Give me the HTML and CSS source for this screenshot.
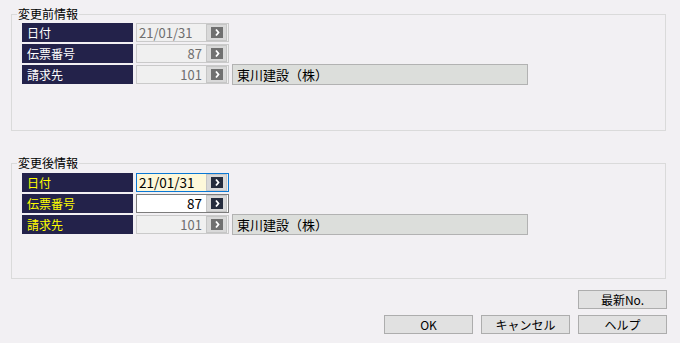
FILE: index.html
```html
<!DOCTYPE html>
<html lang="ja">
<head>
<meta charset="utf-8">
<link rel="stylesheet" href="styles.css">
</head>
<body>
<div class="page">
  <section class="group">
    <div class="group-title">変更前情報</div>
    <div class="row">
      <div class="label">日付</div>
      <div class="field"><span class="val">21/01/31</span><span class="btn"><span class="sq"><svg width="12" height="11" viewBox="0 0 12 11"><path d="M5 2.5 L7.5 5.5 L5 8.5" fill="none" stroke="#fff" stroke-width="1.8"/></svg></span></span></div>
    </div>
    <div class="row">
      <div class="label">伝票番号</div>
      <div class="field"><span class="val num">87</span><span class="btn"><span class="sq"><svg width="12" height="11" viewBox="0 0 12 11"><path d="M5 2.5 L7.5 5.5 L5 8.5" fill="none" stroke="#fff" stroke-width="1.8"/></svg></span></span></div>
    </div>
    <div class="row">
      <div class="label">請求先</div>
      <div class="field"><span class="val num">101</span><span class="btn"><span class="sq"><svg width="12" height="11" viewBox="0 0 12 11"><path d="M5 2.5 L7.5 5.5 L5 8.5" fill="none" stroke="#fff" stroke-width="1.8"/></svg></span></span></div>
      <div class="company">東川建設（株）</div>
    </div>
  </section>

  <section class="group group2">
    <div class="group-title">変更後情報</div>
    <div class="row">
      <div class="label yellow">日付</div>
      <div class="field focus"><span class="val">21/01/31</span><span class="btn"><span class="sq"><svg width="12" height="11" viewBox="0 0 12 11"><path d="M5 2.5 L7.5 5.5 L5 8.5" fill="none" stroke="#fff" stroke-width="1.8"/></svg></span></span></div>
    </div>
    <div class="row">
      <div class="label yellow">伝票番号</div>
      <div class="field edit"><span class="val num">87</span><span class="btn"><span class="sq"><svg width="12" height="11" viewBox="0 0 12 11"><path d="M5 2.5 L7.5 5.5 L5 8.5" fill="none" stroke="#fff" stroke-width="1.8"/></svg></span></span></div>
    </div>
    <div class="row">
      <div class="label yellow">請求先</div>
      <div class="field"><span class="val num">101</span><span class="btn"><span class="sq"><svg width="12" height="11" viewBox="0 0 12 11"><path d="M5 2.5 L7.5 5.5 L5 8.5" fill="none" stroke="#fff" stroke-width="1.8"/></svg></span></span></div>
      <div class="company">東川建設（株）</div>
    </div>
  </section>

  <div class="actions">
    <div class="action-row">
      <button class="pbtn">最新No.</button>
    </div>
    <div class="action-row">
      <button class="pbtn">OK</button>
      <button class="pbtn">キャンセル</button>
      <button class="pbtn">ヘルプ</button>
    </div>
  </div>
</div>
</body>
</html>
```

FILE: styles.css
```css
html, body {
  margin: 0;
  padding: 0;
  background: #f2f0f3;
}
body {
  font-family: "Noto Sans CJK JP", "Noto Sans", sans-serif;
  font-size: 12px;
  color: #000;
}
.page {
  padding: 14px 13px 0 11px;
  width: 680px;
  box-sizing: border-box;
}
.group {
  position: relative;
  box-sizing: border-box;
  width: 655px;
  height: 117px;
  border: 1px solid #dadada;
  padding: 8px 0 0 10px;
  display: flex;
  flex-direction: column;
  gap: 2px;
}
.group2 {
  margin-top: 32px;
  height: 116px;
  padding-top: 9px;
}
.group-title {
  position: absolute;
  left: 5px;
  top: -9px;
  padding: 0 1px;
  background: #f2f0f3;
  line-height: 16px;
  font-size: 12px;
}
.row {
  display: flex;
  align-items: center;
  height: 19px;
  gap: 3px;
}
.label {
  width: 111px;
  height: 19px;
  box-sizing: border-box;
  background: #23224a;
  color: #fff;
  padding-left: 5px;
  line-height: 19px;
  font-size: 12px;
}
.label.yellow {
  color: #ffff00;
}
.field {
  width: 93px;
  height: 19px;
  box-sizing: border-box;
  border: 1px solid #cacaca;
  background: #f0f0f0;
  display: flex;
  align-items: center;
}
.val {
  flex: 1;
  height: 17px;
  line-height: 17px;
  padding: 0 2px;
  color: #6e6e6e;
  font-size: 13px;
}
.val.num {
  text-align: right;
  padding-right: 4px;
}
.btn {
  width: 19px;
  height: 15px;
  margin: 0 1px 0 0;
  border: 1px solid #c6c6c6;
  background: #d9d9d9;
  display: flex;
  align-items: center;
  justify-content: center;
}
.sq {
  width: 12px;
  height: 11px;
  background: #707070;
  display: flex;
}
.field.focus {
  border-color: #0a78d4;
}
.field.focus .val {
  background: #fdf8da;
  color: #000;
  font-size: 13.5px;
}
.field.focus .sq,
.field.edit .sq {
  background: #252c3d;
}
.field.edit {
  border-color: #7c7c7c;
  background: #fff;
}
.field.edit .val {
  color: #000;
  font-size: 13.5px;
}
.company {
  width: 296px;
  height: 21px;
  box-sizing: border-box;
  border: 1px solid #b2b2b2;
  background: #dcdedb;
  line-height: 19px;
  padding-left: 4px;
  font-size: 13px;
}
.actions {
  margin-top: 11px;
  display: flex;
  flex-direction: column;
  gap: 6px;
  width: 656px;
}
.action-row {
  display: flex;
  justify-content: flex-end;
  gap: 8px;
}
.pbtn {
  width: 89px;
  height: 19px;
  box-sizing: border-box;
  border: 1px solid #adadad;
  background: #e1e1e1;
  font-family: "Noto Sans CJK JP", "Noto Sans", sans-serif;
  font-size: 12px;
  line-height: 17px;
  padding: 0;
  color: #000;
}
```
